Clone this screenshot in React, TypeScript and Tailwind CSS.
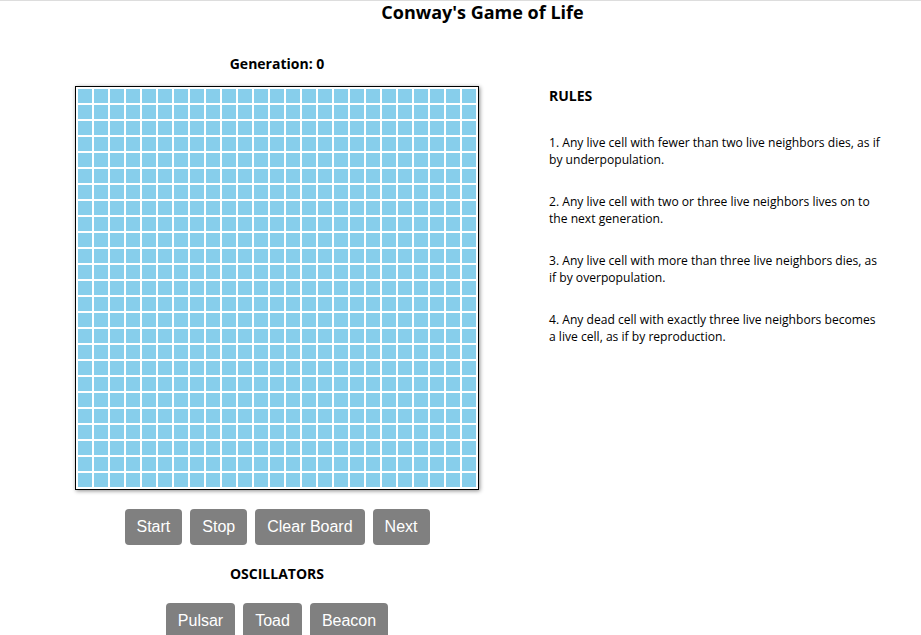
const SIZE = 25

const rules = [
  "1. Any live cell with fewer than two live neighbors dies, as if by underpopulation.",
  "2. Any live cell with two or three live neighbors lives on to the next generation.",
  "3. Any live cell with more than three live neighbors dies, as if by overpopulation.",
  "4. Any dead cell with exactly three live neighbors becomes a live cell, as if by reproduction.",
]

function Button({ label }: { label: string }) {
  return (
    <button className="h-9 rounded bg-[#808080] px-3 font-['Liberation_Sans',Arial,sans-serif] text-base text-white">
      {label}
    </button>
  )
}

export default function App() {
  const cells = Array.from({ length: SIZE * SIZE })

  return (
    <div className="min-h-screen border-t border-[#dddddd] bg-white font-['Open_Sans',sans-serif] text-black">
      <h1 className="pl-11 text-center text-[18px] font-bold leading-[22px]">Conway's Game of Life</h1>

      <div className="mt-[31px] flex">
        <div className="ml-[75px] flex w-[404px] flex-col items-center">
          <div className="text-sm font-bold leading-5">Generation: 0</div>

          <div className="mt-3 border border-black bg-white p-px shadow-[1px_1px_4px_rgba(0,0,0,0.45)]">
            <div className="grid grid-cols-[repeat(25,16px)]">
              {cells.map((_, i) => (
                <div key={i} className="h-4 w-4 border border-white bg-[#87ceeb]" />
              ))}
            </div>
          </div>

          <div className="mt-[19px] flex gap-2">
            <Button label="Start" />
            <Button label="Stop" />
            <Button label="Clear Board" />
            <Button label="Next" />
          </div>

          <div className="mt-[19px] text-sm font-bold leading-5">OSCILLATORS</div>

          <div className="mt-[19px] flex gap-2">
            <Button label="Pulsar" />
            <Button label="Toad" />
            <Button label="Beacon" />
          </div>
        </div>

        <div className="ml-[70px] mt-[32px] w-[334px]">
          <div className="text-sm font-bold leading-5">RULES</div>
          <div className="mt-7 flex flex-col gap-[25px]">
            {rules.map((r) => (
              <p key={r} className="text-[12.1px] leading-[17px]">
                {r}
              </p>
            ))}
          </div>
        </div>
      </div>
    </div>
  )
}
